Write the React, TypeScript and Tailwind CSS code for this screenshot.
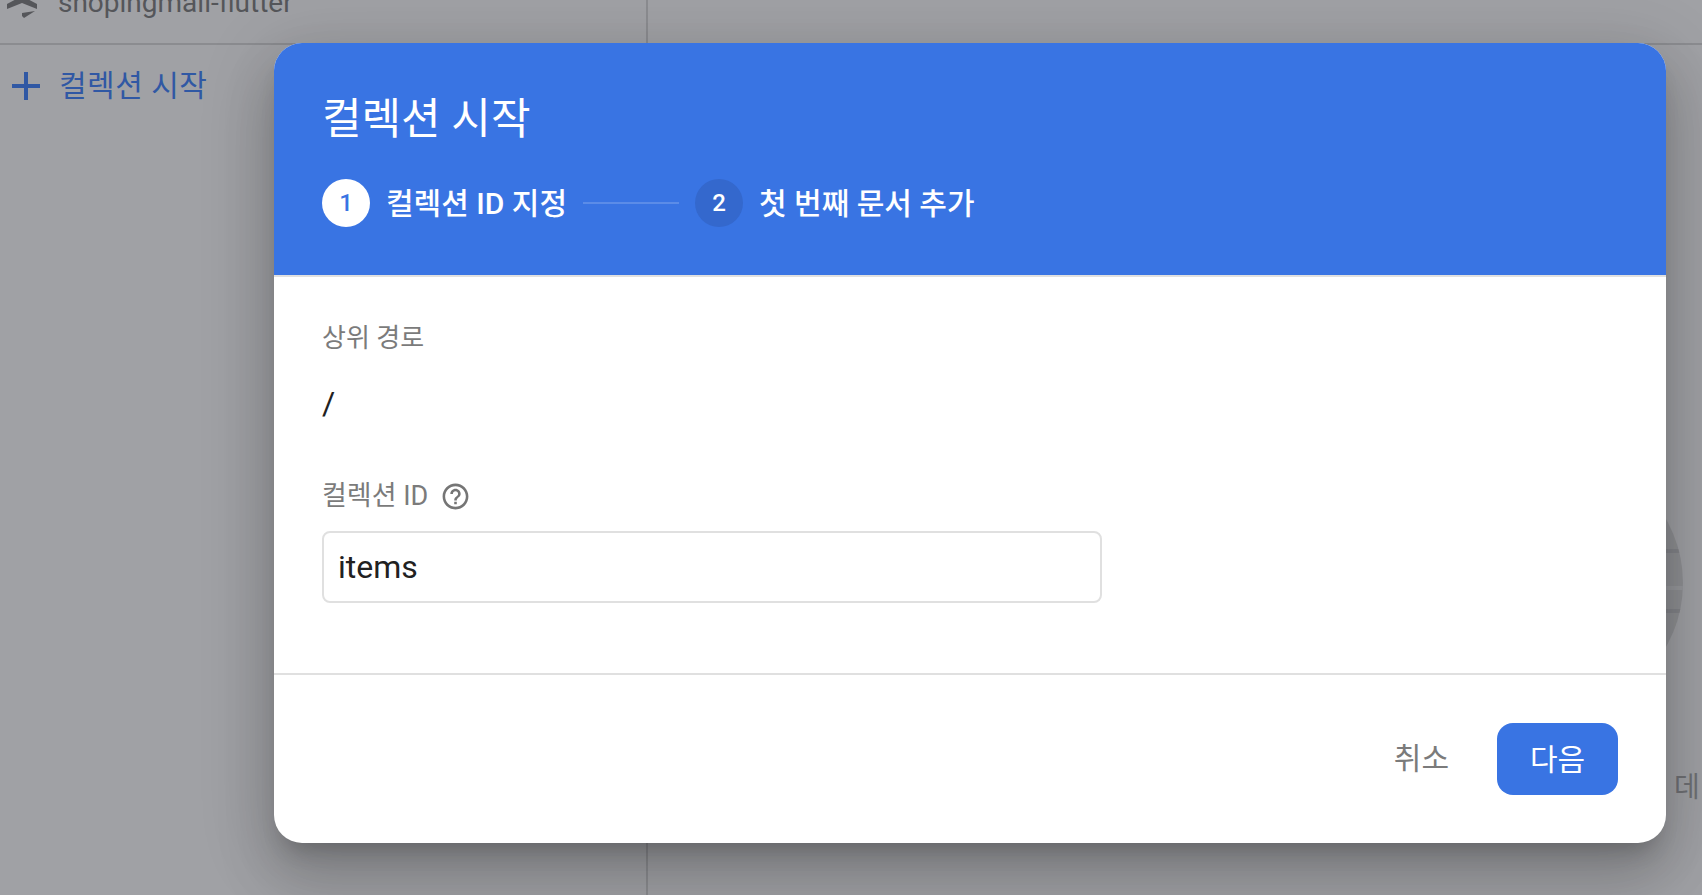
const sans = "font-['Roboto','Noto_Sans_CJK_KR',sans-serif]";

function ProjectLogo() {
  return (
    <svg width="30" height="18" viewBox="0 0 30 18" className="shrink-0">
      <path d="M0 4 L15 -4 L30 4 L30 9 L15 3 L0 9 Z" fill="#55565a" />
      <path d="M15 13 L28 11 L17 18 L15 16 Z" fill="#55565a" />
    </svg>
  );
}

function Step({ n, label, active }: { n: number; label: string; active?: boolean }) {
  return (
    <div className="flex items-center gap-[16px]">
      <div
        className={
          active
            ? "flex h-12 w-12 items-center justify-center rounded-full bg-white text-[24px] font-medium text-[#3974e3]"
            : "flex h-12 w-12 items-center justify-center rounded-full bg-[#3468cd] text-[24px] font-medium text-white"
        }
      >
        {n}
      </div>
      <span className="text-[30px] font-medium text-white">{label}</span>
    </div>
  );
}

export default function App() {
  return (
    <div className={`relative h-screen w-full overflow-hidden bg-[#a0a1a5] ${sans}`}>
      {/* page behind the scrim */}
      <div className="flex h-[45px] border-b-2 border-[#8b8c90]">
        <div className="flex w-[648px] items-start gap-[21px] border-r-2 border-[#8b8c90] pl-[7px]">
          <ProjectLogo />
          <span className="-mt-[13px] text-[28px] leading-[32px] text-[#55565a]">shopingmall-flutter</span>
        </div>
      </div>
      <div className="flex h-[850px]">
        <div className="w-[648px] border-r-2 border-[#8b8c90]">
          <div className="mt-[21px] flex items-center gap-[17px] pl-[10px] text-[#3058a4]">
            <svg width="32" height="32" viewBox="0 0 32 32">
              <path d="M14 2h4v12h12v4H18v12h-4V18H2v-4h12z" fill="currentColor" />
            </svg>
            <span className="text-[30px] leading-[40px] tracking-[0.5px]">컬렉션 시작</span>
          </div>
        </div>
      </div>

      {/* illustration peeking out behind the dialog */}
      <svg className="absolute left-[1425px] top-[454px]" width="258" height="258" viewBox="0 0 258 258">
        <defs>
          <clipPath id="disc">
            <circle cx="129" cy="129" r="129" />
          </clipPath>
        </defs>
        <g clipPath="url(#disc)">
          <rect width="258" height="258" fill="#8f9094" />
          <rect x="200" y="95" width="58" height="4" fill="#84858a" />
          <rect x="200" y="132" width="58" height="4" fill="#98999d" />
          <rect x="200" y="155" width="58" height="4" fill="#84858a" />
        </g>
      </svg>
      <span className="absolute left-[1674px] top-[767px] text-[28px] text-[#6f7074]">데</span>

      {/* dialog */}
      <div className="absolute left-[274px] top-[43px] flex h-[800px] w-[1392px] flex-col overflow-hidden rounded-[28px] bg-white shadow-[0_16px_22px_-10px_rgba(0,0,0,0.2),0_36px_57px_4px_rgba(0,0,0,0.14),0_14px_69px_12px_rgba(0,0,0,0.12)]">
        <div className="h-[234px] border-b-2 border-[#e0e0e0] bg-[#3974e3] px-[48px] pt-[41px]">
          <h2 className="text-[43px] leading-[70px] text-white">컬렉션 시작</h2>
          <div className="mt-[25px] flex items-center">
            <Step n={1} label="컬렉션 ID 지정" active />
            <div className="mx-[16px] h-[2px] w-[96px] bg-[#5b8ce8]" />
            <Step n={2} label="첫 번째 문서 추가" />
          </div>
        </div>

        <div className="h-[398px] border-b-2 border-[#e0e0e0] px-[48px] pt-[43px]">
          <div className="text-[26px] leading-[36px] text-[#7b7b7b]">상위 경로</div>
          <div className="mt-[29px] text-[32px] leading-[36px] text-[#212121]">/</div>
          <div className="mt-[57px] flex items-center gap-[12px] text-[27px] leading-[36px] text-[#7b7b7b]">
            <span>컬렉션 ID</span>
            <svg width="31" height="31" viewBox="0 0 24 24" fill="#757575">
              <path d="M11 18h2v-2h-2v2zm1-16C6.48 2 2 6.48 2 12s4.48 10 10 10 10-4.48 10-10S17.52 2 12 2zm0 18c-4.41 0-8-3.59-8-8s3.59-8 8-8 8 3.59 8 8-3.59 8-8 8zm0-14c-2.21 0-4 1.79-4 4h2c0-1.1.9-2 2-2s2 .9 2 2c0 2-3 1.75-3 5h2c0-2.25 3-2.5 3-5 0-2.21-1.79-4-4-4z" />
            </svg>
          </div>
          <input
            readOnly
            value="items"
            className="mt-[17px] block h-[72px] w-[780px] rounded-[8px] border-2 border-[#e0e0e0] px-[14px] text-[32px] text-[#212121] outline-none"
          />
        </div>

        <div className="flex flex-1 items-start justify-end gap-[48px] px-[48px] pt-[48px]">
          <span className="text-[30px] leading-[72px] text-[#7b7b7b]">취소</span>
          <button className="h-[72px] w-[121px] rounded-[16px] bg-[#3974e3] text-[30px] text-white">다음</button>
        </div>
      </div>
    </div>
  );
}
